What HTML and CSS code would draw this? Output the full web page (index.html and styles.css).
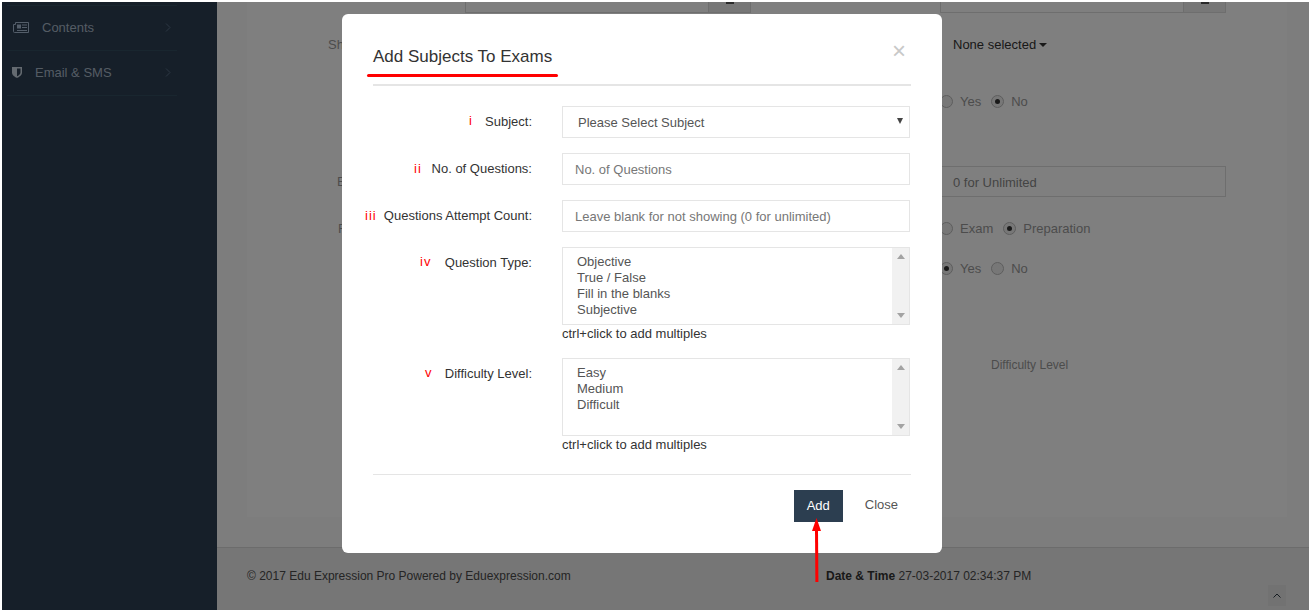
FILE: index.html
```html
<!DOCTYPE html>
<html lang="en">
<head>
<meta charset="utf-8">
<title>Add Subjects To Exams</title>
<link rel="stylesheet" href="styles.css">
</head>
<body>
<div class="frame">
  <aside class="sidebar">
    <ul class="menu">
      <li class="menu-item">
        <svg class="icon-news" width="16" height="11" viewBox="0 0 16 11"><path d="M2.500.5h13v10H1.500a1 1 0 0 1-1-1V2.500h2z" fill="none" stroke="#a8bcd4"/><path d="M4 2.500h4v4H4zM9 2.500h5v1H9zM9 5h5v1H9zM4 8h10v1H4z" fill="#a8bcd4"/></svg>
        <span class="menu-label">Contents</span>
        <svg class="chev" width="6" height="9" viewBox="0 0 6 9"><path d="M1 .5l4 4-4 4" fill="none" stroke="#5a7088"/></svg>
      </li>
      <li class="menu-item">
        <svg class="icon-shield" width="10" height="11" viewBox="0 0 10 11"><path d="M0 0h10v5.500C10 8.500 7 10 5 11 3 10 0 8.500 0 5.500z" fill="#c8d4e0"/><path d="M5 1.500h3.500v4C8.500 7.500 6.500 8.500 5 9.300z" fill="#2c3e52"/></svg>
        <span class="menu-label">Email &amp; SMS</span>
        <svg class="chev" width="6" height="9" viewBox="0 0 6 9"><path d="M1 .5l4 4-4 4" fill="none" stroke="#5a7088"/></svg>
      </li>
    </ul>
  </aside>

  <div class="main">
    <div class="content">
      <div class="card">
        <div class="bg-row bg-r1">
          <div class="bg-field bg-col2"><span class="bg-addon"><i class="bg-addon-mark"></i></span></div>
          <div class="bg-field bg-col4"><span class="bg-addon"><i class="bg-addon-mark"></i></span></div>
        </div>
        <div class="bg-row bg-r2">
          <span class="bg-label bg-label-sh">Sh</span>
          <span class="bg-col4 bg-dropdown">None selected <i class="caret"></i></span>
        </div>
        <div class="bg-row bg-r3">
          <div class="bg-col4 radios">
            <span class="radio"></span><span class="radio-text">Yes</span>
            <span class="radio on"></span><span class="radio-text">No</span>
          </div>
        </div>
        <div class="bg-row bg-r4">
          <span class="bg-label bg-label-e">E</span>
          <div class="bg-field bg-col4 bg-input">0 for Unlimited</div>
        </div>
        <div class="bg-row bg-r5">
          <span class="bg-label bg-label-f">F</span>
          <div class="bg-col4 radios">
            <span class="radio"></span><span class="radio-text">Exam</span>
            <span class="radio on"></span><span class="radio-text">Preparation</span>
          </div>
        </div>
        <div class="bg-row bg-r6">
          <div class="bg-col4 radios">
            <span class="radio on"></span><span class="radio-text">Yes</span>
            <span class="radio"></span><span class="radio-text">No</span>
          </div>
        </div>
        <div class="bg-row bg-r7">
          <span class="bg-col4 bg-diff">Difficulty Level</span>
        </div>
      </div>
    </div>
    <footer class="footer">
      <span class="copy">© 2017 Edu Expression Pro Powered by Eduexpression.com</span>
      <span class="datetime"><b>Date &amp; Time</b> 27-03-2017 02:34:37 PM</span>
      <span class="to-top"><svg width="8" height="5" viewBox="0 0 8 5"><path d="M.5 4.500L4 1l3.500 3.500" fill="none" stroke="#2f3a45"/></svg></span>
    </footer>
  </div>

  <div class="backdrop"></div>

  <section class="modal">
    <header class="modal-head">
      <h4 class="modal-title">Add Subjects To Exams</h4>
      <span class="modal-x">×</span>
    </header>
    <form class="modal-body">
      <div class="row">
        <label class="row-label">Subject:</label>
        <div class="control control-select"><span>Please Select Subject</span><i class="select-arrow"></i></div>
      </div>
      <div class="row">
        <label class="row-label">No. of Questions:</label>
        <div class="control control-input">No. of Questions</div>
      </div>
      <div class="row">
        <label class="row-label">Questions Attempt Count:</label>
        <div class="control control-input">Leave blank for not showing (0 for unlimited)</div>
      </div>
      <div class="row row-list">
        <label class="row-label">Question Type:</label>
        <div>
          <div class="listbox">
            <ul class="options"><li>Objective</li><li>True / False</li><li>Fill in the blanks</li><li>Subjective</li></ul>
            <div class="scrollbar"><i class="sb-up"></i><i class="sb-down"></i></div>
          </div>
          <p class="help">ctrl+click to add multiples</p>
        </div>
      </div>
      <div class="row row-list">
        <label class="row-label">Difficulty Level:</label>
        <div>
          <div class="listbox">
            <ul class="options"><li>Easy</li><li>Medium</li><li>Difficult</li></ul>
            <div class="scrollbar"><i class="sb-up"></i><i class="sb-down"></i></div>
          </div>
          <p class="help">ctrl+click to add multiples</p>
        </div>
      </div>
    </form>
    <footer class="modal-foot">
      <span class="btn-add">Add</span>
      <span class="btn-close">Close</span>
    </footer>
  </section>

  <span class="num num-1">i</span>
  <span class="num num-2">ii</span>
  <span class="num num-3">iii</span>
  <span class="num num-4">iv</span>
  <span class="num num-5">v</span>
  <i class="title-underline"></i>
  <svg class="arrow" width="12" height="66" viewBox="0 0 12 66"><path d="M5 12h3l.4 52h-3z" fill="#f00"/><path d="M6.500 0L11 13H2z" fill="#f00"/></svg>
</div>
</body>
</html>
```

FILE: styles.css
```css
* { box-sizing: border-box; }
html, body { margin: 0; height: 100%; background: #fff; overflow: hidden; }
body { font-family: "Liberation Sans", Arial, sans-serif; font-size: 13px; color: #333; }
ul { list-style: none; margin: 0; padding: 0; }
i { display: block; }

.frame { position: absolute; left: 2px; right: 0; top: 2px; height: 608px; display: flex; }

/* sidebar */
.sidebar { width: 215px; flex: none; background: #2c3e52; padding: 3px 0 0 5px; }
.menu { width: 170px; border-top: 1px solid #324c5e; }
.menu-item { height: 45px; display: flex; align-items: center; border-bottom: 1px solid #324c5e; padding: 0 0 2px 6px; color: #a9b8c8; }
.icon-news { margin-right: 13px; }
.icon-shield { margin: 0 13px 0 -1px; }
.menu-label { flex: 1; }
.chev { margin-right: 6px; }

/* page behind the dialog */
.main { flex: 1; display: flex; flex-direction: column; min-width: 0; }
.content { flex: none; height: 546px; background: #fafafa; padding: 0 22px 0 30px; border-bottom: 1px solid #d8d8d8; }
.card { height: 515px; background: #fff; display: flex; flex-direction: column; color: #999; }
.bg-row { display: grid; grid-template-columns: 218px 286px 189px 286px; align-items: center; }
.bg-r1 { height: 11px; align-items: stretch; }
.bg-r2 { height: 62px; }
.bg-r3 { height: 52px; }
.bg-r4 { height: 31px; margin-top: 39px; align-items: stretch; }
.bg-r5 { height: 62px; }
.bg-r6 { height: 18px; }
.bg-r7 { height: 176px; }
.bg-col2 { grid-column: 2; }
.bg-col4 { grid-column: 4; }
.bg-field { border: 1px solid #dcdcdc; border-top: 0; display: flex; justify-content: flex-end; }
.bg-input { border-top: 1px solid #dcdcdc; align-items: center; justify-content: flex-start; padding: 1px 0 0 12px; color: #888; }
.bg-addon { width: 42px; background: #eeeeee; border-left: 1px solid #dcdcdc; display: flex; justify-content: center; }
.bg-addon-mark { width: 8px; height: 2px; background: #555; }
.bg-label { grid-column: 1; grid-row: 1; align-self: center; }
.bg-label-sh { padding-left: 81px; }
.bg-label-e { padding-left: 90px; }
.bg-label-f { padding-left: 91px; }
.bg-dropdown { padding-left: 13px; color: #333; display: flex; align-items: center; white-space: pre; }
.caret { width: 0; height: 0; margin: 2px 0 0 -1px; border-left: 4px solid transparent; border-right: 4px solid transparent; border-top: 4px solid #333; }
.radios { display: flex; align-items: center; }
.radio { width: 13px; height: 13px; border-radius: 50%; border: 1px solid #bbb; background: #eee; display: flex; align-items: center; justify-content: center; flex: none; }
.radio.on::after { content: ""; width: 5px; height: 5px; border-radius: 50%; background: #333; }
.radio-text { margin: 0 10px 0 7px; color: #999; }
.bg-diff { font-size: 12px; padding-left: 51px; }

/* footer */
.footer { flex: 1; background: #ececec; display: flex; align-items: center; padding: 0 22px 6px 30px; font-size: 12px; color: #4a4a4a; position: relative; }
.copy { width: 579px; flex: none; }
.datetime b { color: #333; }
.to-top { position: absolute; right: 23px; bottom: 4px; width: 18px; height: 21px; background: #e4e4e4; display: flex; align-items: center; justify-content: center; }

/* overlay */
.backdrop { position: absolute; inset: 0; background: rgba(0,0,0,.5); }

/* dialog */
.modal { position: absolute; left: 340px; top: 12px; width: 600px; height: 539px; background: #fff; border-radius: 6px; padding: 0 31px; }
.modal-head { height: 72px; border-bottom: 2px solid #e5e5e5; display: flex; justify-content: space-between; align-items: flex-start; }
.modal-title { margin: 33px 0 0; font-size: 17px; line-height: 20px; font-weight: 400; color: #333; }
.modal-x { color: #c8c8c8; font-size: 24px; font-weight: 400; line-height: 24px; margin: 25px 5px 0 0; }
.modal-body { padding-top: 20px; }
.row { display: grid; grid-template-columns: 159px 348px; column-gap: 30px; margin-bottom: 15px; }
.row-list { margin-bottom: 16px; }
.row-label { text-align: right; line-height: 20px; padding-top: 6px; white-space: nowrap; color: #333; }
.control { height: 32px; border: 1px solid #e5e5e5; display: flex; align-items: center; padding-left: 12px; color: #777; }
.control-select { justify-content: space-between; padding: 0 6px 0 15px; color: #555; }
.select-arrow { width: 0; height: 0; border-left: 3.500px solid transparent; border-right: 3.500px solid transparent; border-top: 6px solid #444; margin-top: -2px; }
.listbox { height: 78px; border: 1px solid #e5e5e5; display: flex; justify-content: space-between; }
.options { padding: 6px 0 0 14px; line-height: 16px; color: #555; }
.scrollbar { width: 17px; background: #f1f1f1; display: flex; flex-direction: column; justify-content: space-between; align-items: center; padding: 6px 0; }
.sb-up { width: 0; height: 0; border-left: 4px solid transparent; border-right: 4px solid transparent; border-bottom: 5px solid #a3a3a3; }
.sb-down { width: 0; height: 0; border-left: 4px solid transparent; border-right: 4px solid transparent; border-top: 5px solid #a3a3a3; }
.help { margin: 0; height: 17px; line-height: 17px; color: #333; }
.modal-foot { margin-top: 21px; border-top: 1px solid #e5e5e5; padding: 15px 13px 0 0; display: flex; justify-content: flex-end; align-items: flex-start; gap: 22px; }
.btn-add { width: 49px; height: 32px; background: #2c3e50; color: #fff; display: flex; align-items: center; justify-content: center; padding-bottom: 2px; }
.btn-close { color: #555; line-height: 30px; }

/* red annotations */
.num { position: absolute; color: #f00; font-size: 13px; line-height: 20px; letter-spacing: 1px; }
.num-1 { left: 467px; top: 109px; }
.num-2 { left: 412px; top: 157px; }
.num-3 { left: 363px; top: 204px; }
.num-4 { left: 418px; top: 250px; }
.num-5 { left: 423px; top: 361px; }
.title-underline { position: absolute; left: 365px; top: 72px; width: 191px; height: 3px; border-radius: 2px; background: #f00; }
.arrow { position: absolute; left: 808px; top: 516px; }
```
